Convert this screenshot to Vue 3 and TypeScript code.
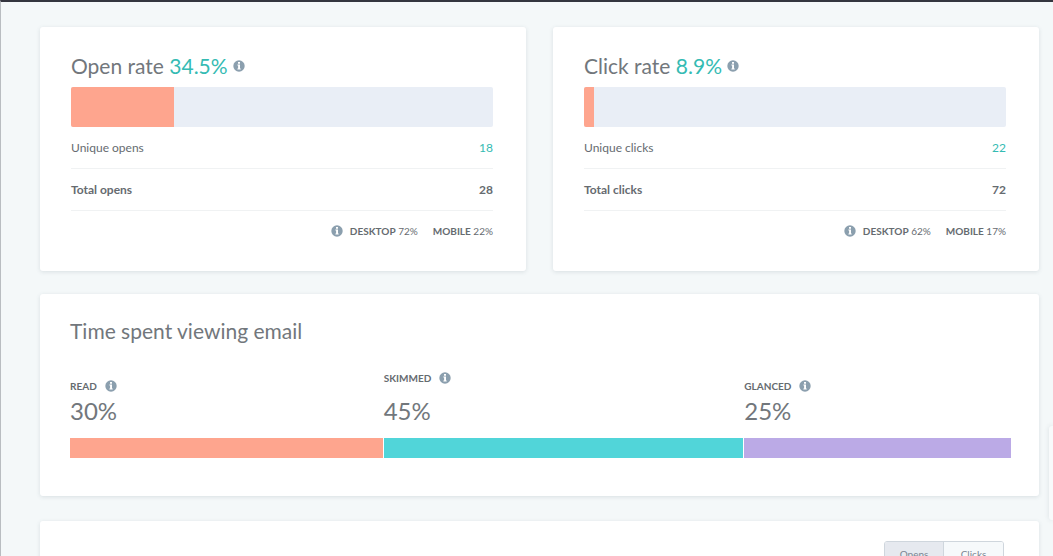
<script setup lang="ts">
import { defineComponent, h, ref } from 'vue'

interface Rate {
  title: string
  rate: string
  fill: number
  uniqueLabel: string
  unique: number
  totalLabel: string
  total: number
  desktop: string
  mobile: string
}

interface Segment {
  label: string
  value: string
  grow: number
  tone: string
}

const rates: Rate[] = [
  {
    title: 'Open rate',
    rate: '34.5%',
    fill: 24.4,
    uniqueLabel: 'Unique opens',
    unique: 18,
    totalLabel: 'Total opens',
    total: 28,
    desktop: '72%',
    mobile: '22%',
  },
  {
    title: 'Click rate',
    rate: '8.9%',
    fill: 2.4,
    uniqueLabel: 'Unique clicks',
    unique: 22,
    totalLabel: 'Total clicks',
    total: 72,
    desktop: '62%',
    mobile: '17%',
  },
]

const segments: Segment[] = [
  { label: 'READ', value: '30%', grow: 313, tone: 'read' },
  { label: 'SKIMMED', value: '45%', grow: 360, tone: 'skimmed' },
  { label: 'GLANCED', value: '25%', grow: 267, tone: 'glanced' },
]

const modes = ['Opens', 'Clicks']
const mode = ref('Opens')

const InfoIcon = defineComponent({
  render: () =>
    h('svg', { viewBox: '0 0 12 12', width: 12, height: 12, 'aria-hidden': 'true' }, [
      h('circle', { cx: 6, cy: 6, r: 5.7, fill: '#8b9fae' }),
      h('path', {
        d: 'M5 2.1h2v1.6H5zM4.4 4.6H7v3.9h.7v1H4.4v-1h.7V5.6h-.7z',
        fill: '#fff',
      }),
    ]),
})
</script>

<template>
  <main class="page">
    <div class="rates">
      <section v-for="r in rates" :key="r.title" class="card rate-card">
        <h2 class="title">
          <span>{{ r.title }} <span class="accent">{{ r.rate }}</span></span>
          <InfoIcon />
        </h2>
        <div class="track"><div class="fill" :style="{ width: r.fill + '%' }"></div></div>
        <dl class="stats">
          <div class="row">
            <dt>{{ r.uniqueLabel }}</dt>
            <dd class="accent">{{ r.unique }}</dd>
          </div>
          <div class="row total">
            <dt>{{ r.totalLabel }}</dt>
            <dd>{{ r.total }}</dd>
          </div>
        </dl>
        <div class="devices">
          <InfoIcon />
          <span class="device"><b>DESKTOP</b> {{ r.desktop }}</span>
          <span class="device"><b>MOBILE</b> {{ r.mobile }}</span>
        </div>
      </section>
    </div>

    <section class="card time-card">
      <h2 class="title">Time spent viewing email</h2>
      <div class="segments">
        <div
          v-for="s in segments"
          :key="s.label"
          class="segment"
          :class="s.tone"
          :style="{ flexGrow: s.grow }"
        >
          <div class="label">{{ s.label }} <InfoIcon /></div>
          <div class="value">{{ s.value }}</div>
          <div class="bar"></div>
        </div>
      </div>
    </section>

    <section class="card chart-card">
      <div class="toggle">
        <button
          v-for="m in modes"
          :key="m"
          type="button"
          :class="{ active: m === mode }"
          @click="mode = m"
        >{{ m }}</button>
      </div>
    </section>

    <div class="side-tab"></div>
  </main>
</template>

<style>
body {
  margin: 0;
}
</style>

<style scoped>
.page {
  position: relative;
  box-sizing: border-box;
  height: 100vh;
  overflow: hidden;
  padding: 25px 14px 0 39px;
  border-top: 2px solid #34363f;
  border-left: 1px solid #b9bdc1;
  background: #f4f8f9;
  color: #666b70;
  font-family: Lato, "Liberation Sans", sans-serif;
  font-size: 12px;
  line-height: 16px;
}
.rates {
  display: grid;
  grid-template-columns: 1fr 1fr;
  gap: 27px;
}
.card {
  background: #fff;
  border-radius: 3px;
  box-shadow: 0 1px 4px rgba(60, 80, 90, 0.14);
}
.rate-card {
  padding: 25px 33px 20px 31px;
}
.title {
  display: flex;
  align-items: center;
  gap: 5px;
  margin: 0;
  color: #72777c;
  font-size: 21px;
  line-height: 28px;
  font-weight: 400;
}
.accent {
  color: #35bbb3;
}
.track {
  height: 40px;
  margin-top: 7px;
  background: #e9eef6;
  border-radius: 2px;
  overflow: hidden;
}
.fill {
  height: 100%;
  background: #fea58e;
}
.stats {
  margin: 0;
}
.row {
  display: flex;
  justify-content: space-between;
  align-items: center;
  height: 41px;
  border-bottom: 1px solid #f0f2f3;
}
.row dd {
  margin: 0;
}
.total {
  font-weight: 700;
}
.devices {
  display: flex;
  justify-content: flex-end;
  align-items: center;
  height: 40px;
  gap: 15px;
  font-size: 10px;
}
.devices svg {
  margin-right: -8px;
}
.time-card {
  margin-top: 23px;
  padding: 23px 28px 38px 30px;
}
.segments {
  display: flex;
  align-items: flex-end;
  gap: 1px;
  margin-top: 25px;
}
.segment {
  flex-basis: 0;
}
.label {
  display: flex;
  align-items: center;
  gap: 8px;
  margin-bottom: 2px;
  font-size: 10px;
  font-weight: 700;
}
.skimmed .label {
  margin-bottom: 10px;
}
.value {
  margin-bottom: 12px;
  color: #72777c;
  font-size: 24px;
  line-height: 30px;
}
.bar {
  height: 20px;
}
.read .bar {
  background: #fea58e;
}
.skimmed .bar {
  background: #51d5d9;
}
.glanced .bar {
  background: #bbaae6;
}
.chart-card {
  display: flex;
  justify-content: flex-end;
  margin-top: 25px;
  padding: 20px 35px 40px 30px;
}
.toggle {
  display: flex;
  border: 1px solid #cfd6dd;
  border-radius: 3px;
  overflow: hidden;
}
.toggle button {
  width: 59px;
  height: 24px;
  padding: 0;
  border: 0;
  background: #f6f9fb;
  color: #7a8592;
  font: inherit;
  font-size: 10px;
}
.toggle .active {
  background: #e6e9ef;
  border-right: 1px solid #cfd6dd;
}
.side-tab {
  position: absolute;
  right: 0;
  bottom: 36px;
  width: 4px;
  height: 94px;
  border-radius: 3px 0 0 3px;
  background: #f8fafb;
  box-shadow: 0 0 5px rgba(60, 80, 90, 0.14);
}
</style>
